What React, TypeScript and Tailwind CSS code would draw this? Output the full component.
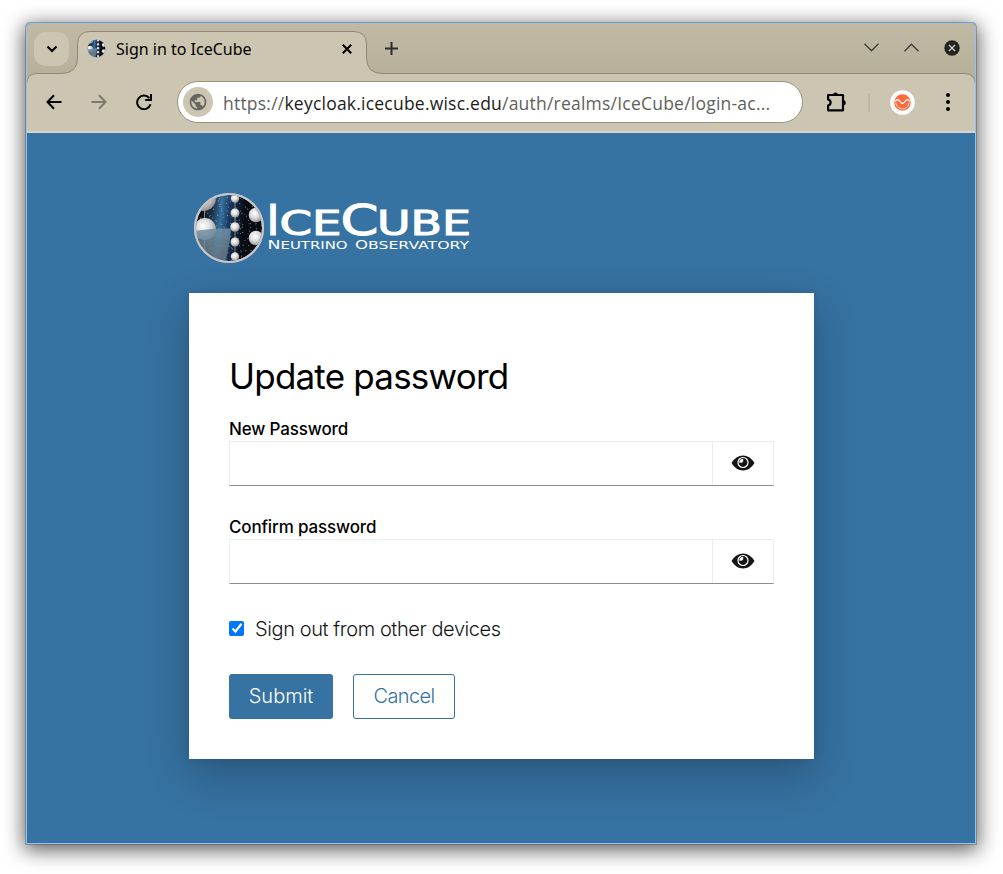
import React from "react";

const stars = Array.from({ length: 190 }, (_, i) => {
  const a = (i * 2.399963) % (Math.PI * 2);
  const r = 32 * Math.sqrt((i + 0.5) / 190);
  const j = ((i * 37) % 11) - 5;
  return { x: 35 + r * Math.cos(a) + j * 0.4, y: 35 + r * Math.sin(a) - j * 0.3, s: 0.3 + ((i * 7) % 5) * 0.11, o: 0.35 + ((i * 3) % 5) * 0.13 };
});

function Globe({ id, className }: { id: string; className: string }) {
  return (
    <svg viewBox="0 0 70 70" className={className}>
      <defs>
        <radialGradient id={id + "s"} cx="42%" cy="38%" r="65%">
          <stop offset="0" stopColor="#ffffff" />
          <stop offset="0.5" stopColor="#dcdcdc" />
          <stop offset="1" stopColor="#8e8e8e" />
        </radialGradient>
        <linearGradient id={id + "m"} x1="0" x2="1" y1="0" y2="0.1">
          <stop offset="0.12" stopColor="#0a0a0e" />
          <stop offset="0.3" stopColor="#1c3850" />
          <stop offset="0.41" stopColor="#36709f" />
          <stop offset="0.54" stopColor="#15335a" />
          <stop offset="0.74" stopColor="#0a0c14" />
        </linearGradient>
        <linearGradient id={id + "w"} x1="0" x2="0" y1="0" y2="1">
          <stop offset="0" stopColor="#7092a6" stopOpacity="0.85" />
          <stop offset="1" stopColor="#66727b" stopOpacity="0.8" />
        </linearGradient>
        <clipPath id={id + "c"}><circle cx="35" cy="35" r="33" /></clipPath>
      </defs>
      <circle cx="35" cy="35" r="35" fill="#c5c5c7" />
      <g clipPath={`url(#${id}c)`}>
        <rect width="70" height="70" fill={`url(#${id}m)`} />
        {stars.map((s, i) => (
          <circle key={i} cx={s.x} cy={s.y} r={s.s} fill={i % 3 ? "#a9c4dd" : "#d5cfae"} opacity={s.o} />
        ))}
        <path d="M10.5 0V70M41 0V70" stroke="#9aa5ad" strokeWidth="0.8" />
        <circle cx="9" cy="5" r="13" fill={`url(#${id}s)`} />
        <circle cx="11" cy="36" r="11" fill={`url(#${id}s)`} />
        <path d="M0 38Q18 35 37 35.5Q36 52 31 70H0Z" fill={`url(#${id}w)`} />
        <circle cx="41" cy="5.500" r="4.200" fill={`url(#${id}s)`} />
        <circle cx="41" cy="20" r="4.500" fill={`url(#${id}s)`} />
        <circle cx="41" cy="34" r="4.800" fill={`url(#${id}s)`} />
        <circle cx="41" cy="49" r="4.500" fill={`url(#${id}s)`} />
        <circle cx="41" cy="63.500" r="4.200" fill={`url(#${id}s)`} />
        <circle cx="62" cy="22" r="7.300" fill={`url(#${id}s)`} />
        <circle cx="62" cy="45" r="7.300" fill={`url(#${id}s)`} />
      </g>
      <circle cx="35" cy="35" r="34" fill="none" stroke="#c5c5c7" strokeWidth="2" />
    </svg>
  );
}

function Wordmark() {
  const big = { fontSize: 42, stroke: "white", strokeWidth: 1.1 };
  const small = { fontSize: 34, stroke: "white", strokeWidth: 1.1 };
  const fit = "spacingAndGlyphs" as const;
  return (
    <svg width="208" height="70" viewBox="0 0 208 70" fill="white" fontFamily="'DejaVu Sans', sans-serif">
      <text x="2.500" y="41.500" textLength="13" lengthAdjust={fit} {...big}>I</text>
      <text x="15.500" y="41.500" textLength="62" lengthAdjust={fit} {...small}>CE</text>
      <text x="76.500" y="41.500" textLength="38" lengthAdjust={fit} {...big}>C</text>
      <text x="113" y="41.500" textLength="94" lengthAdjust={fit} {...small}>UBE</text>
      <text x="3.500" y="56" textLength="13" lengthAdjust={fit} fontSize="13">N</text>
      <text x="16.500" y="56" textLength="67" lengthAdjust={fit} fontSize="11">EUTRINO</text>
      <text x="91" y="56" textLength="13" lengthAdjust={fit} fontSize="13">O</text>
      <text x="104" y="56" textLength="101" lengthAdjust={fit} fontSize="11">BSERVATORY</text>
    </svg>
  );
}

function Chrome() {
  return (
    <header className="relative h-[109px] bg-gradient-to-b from-[#c0baa5] to-[#b6b099] to-50% font-['Noto_Sans',sans-serif]">
      <svg className="absolute left-0 top-0" width="948" height="109" viewBox="27 24 948 109">
        <path d="M26.500 134V84Q27 73.500 37 73.500H62Q77.500 73 77.500 58V43.500Q78 31.500 90 31.500H354Q366.500 32 366.500 44V58Q367 73.500 382 73.500H965Q975 74 975.500 84V134Z" fill="#cbc5b1" stroke="#8e8976" />
        <rect x="27" y="131" width="949" height="2" fill="#d8d4cb" />
      </svg>
      <div className="relative flex h-[49px] items-center pl-[7px]">
        <button className="flex h-[34px] w-[35px] items-center justify-center rounded-[12px] bg-[#cbc5b1]">
          <svg width="12" height="8" viewBox="0 0 12 8" fill="none" stroke="#000" strokeWidth="2"><path d="M1.500 1.500L6 6L10.500 1.500" /></svg>
        </button>
        <Globe id="f" className="ml-[18px] h-[19px] w-[19px]" />
        <span className="ml-[10px] w-[223px] whitespace-nowrap text-[16px] leading-[20px] text-black">Sign in to IceCube</span>
        <svg className="ml-[3px]" width="10" height="10" viewBox="0 0 10 10" stroke="#000" strokeWidth="2"><path d="M.8 .8L9.200 9.200M9.200 .8L.8 9.200" /></svg>
        <svg className="ml-[33px]" width="13" height="13" viewBox="0 0 13 13" stroke="#282c2c" strokeWidth="2"><path d="M0 6.500H13M6.500 0V13" /></svg>
        <div className="ml-auto mr-[15px] flex items-center gap-[25px] pb-[2px]">
          <svg width="15" height="9" viewBox="0 0 15 9" fill="none" stroke="#3b3b38" strokeWidth="1.300"><path d="M.5 .8L7.500 7.800L14.500 .8" /></svg>
          <svg width="15" height="9" viewBox="0 0 15 9" fill="none" stroke="#3b3b38" strokeWidth="1.300"><path d="M.5 8.200L7.500 1.200L14.500 8.200" /></svg>
          <svg width="16" height="16" viewBox="0 0 16 16"><circle cx="8" cy="8" r="7.700" fill="#242422" /><path d="M5 5L11 11M11 5L5 11" stroke="#c9c4b3" strokeWidth="1.500" /></svg>
        </div>
      </div>
      <div className="relative flex h-[58px] items-center pl-[19px]">
        <svg width="16" height="16" viewBox="0 0 16 16" fill="none" stroke="#000" strokeWidth="2"><path d="M15.500 8H2M8 1.300L1.500 8L8 14.700" /></svg>
        <svg className="ml-[29px]" width="16" height="16" viewBox="0 0 16 16" fill="none" stroke="#7c796d" strokeWidth="2"><path d="M.5 8H14M8 1.300L14.500 8L8 14.700" /></svg>
        <svg className="ml-[29px]" width="16" height="16" viewBox="0 0 16 16" fill="none" stroke="#000" strokeWidth="2"><path d="M13.300 4.200A6.800 6.800 0 1 0 14.500 10.200M15 0V6H9.200" /></svg>
        <div className="ml-[25px] flex h-[42px] w-[626px] items-center rounded-full border border-[#98927b] bg-white pl-[5px]">
          <span className="flex h-[30px] w-[30px] items-center justify-center rounded-full bg-[#cbc5b1]">
            <svg width="20" height="20" viewBox="0 0 24 24" fill="#666660"><path d="M12 2C6.480 2 2 6.480 2 12s4.480 10 10 10 10-4.480 10-10S17.520 2 12 2zm-1 17.930c-3.950-.49-7-3.850-7-7.930 0-.62.080-1.210.210-1.790L9 15v1c0 1.100.9 2 2 2v1.930zm6.900-2.540c-.26-.81-1-1.390-1.900-1.390h-1v-3c0-.55-.45-1-1-1H8v-2h2c.55 0 1-.45 1-1V7h2c1.100 0 2-.9 2-2v-.41c2.930 1.190 5 4.060 5 7.410 0 2.080-.8 3.970-2.100 5.390z" /></svg>
          </span>
          <span className="ml-[10px] whitespace-nowrap pt-[1px] font-['Open_Sans','Noto_Sans',sans-serif] text-[17.500px] leading-[24px] tracking-[0.22px] text-[#605f59]">https://<span className="text-[#1c1c1a]">keycloak.icecube.wisc.edu</span>/auth/realms/IceCube/login-ac...</span>
        </div>
        <svg className="ml-[22px]" width="22" height="22" viewBox="0 0 22 22"><path d="M3.100 4H18V19.300H3.100V14.500Q5.600 14 5.600 11.500T3.100 8.500Z" fill="none" stroke="#000" strokeWidth="2.200" strokeLinejoin="round" /><path d="M8 4a2.500 2.500 0 0 1 5 0ZM18 9a2.700 2.700 0 0 1 0 5.400Z" /></svg>
        <span className="ml-[21px] h-[19px] w-[2px] bg-[#bdb7a3]" />
        <svg className="ml-[20px]" width="25" height="25" viewBox="0 0 25 25"><circle cx="12.500" cy="12.500" r="12.300" fill="white" /><circle cx="12.500" cy="12.500" r="8.300" fill="#ff6b3c" /><path d="M5.300 11.500C7 8.500 8.500 9.500 9.600 11.200Q12.500 15.500 15.400 11.200C16.500 9.500 18 8.500 19.700 11.500" fill="none" stroke="white" strokeWidth="1.300" /><path d="M5.800 12.500C7 21 18 21 19.200 12.500" fill="none" stroke="white" strokeWidth=".8" /></svg>
        <svg className="ml-[31px]" width="4" height="18" viewBox="0 0 4 18"><circle cx="2" cy="2" r="2" /><circle cx="2" cy="9" r="2" /><circle cx="2" cy="16" r="2" /></svg>
      </div>
    </header>
  );
}

function PasswordField({ label }: { label: string }) {
  return (
    <div>
      <label className="block h-[24px] whitespace-nowrap text-[17px] font-medium leading-[25px] tracking-[-0.15px] text-black">{label}</label>
      <div className="flex h-[45px] w-[545px] border border-[#ededed] border-b-[#8a8d90]">
        <input type="password" aria-label={label} className="min-w-0 flex-1 outline-none" />
        <button aria-label="Show password" className="flex w-[61px] items-center justify-center border-l border-[#ededed] pb-[2px]">
          <svg width="24" height="16" viewBox="0 0 24 16">
            <path d="M.5 8Q5 .5 12 .5T23.500 8Q19 15.500 12 15.500T.5 8Z" fill="#151515" />
            <circle cx="12" cy="7.500" r="5" fill="#151515" stroke="white" strokeWidth="1.200" />
            <path d="M8.500 7.500A3.500 3.500 0 0 1 12 4V5.800A1.700 1.700 0 0 1 10.300 7.500Z" fill="white" stroke="white" strokeWidth=".4" />
          </svg>
        </button>
      </div>
    </div>
  );
}

export default function App() {
  return (
    <div className="h-[874px] w-[1003px] overflow-hidden bg-white pl-[26px] pt-[23px]">
      <div className="h-[821px] w-[950px] overflow-hidden rounded-t-[4px] border border-[#8fc3f5] bg-[#3672a2] shadow-[0_0_0_1px_rgba(80,80,75,0.4),0_4px_20px_2px_rgba(0,0,0,0.65)]">
        <Chrome />
        <main className="pl-[162px] pt-[60px] font-['Inter',sans-serif]">
          <div className="flex h-[70px] pl-[5px]">
            <Globe id="g" className="h-[70px] w-[70px]" />
            <Wordmark />
          </div>
          <section className="mt-[30px] h-[466px] w-[625px] bg-white pl-[40px] pt-[60px] shadow-[0_16px_42px_rgba(3,3,3,0.24),0_0_8px_rgba(3,3,3,0.1)]">
            <h1 className="h-[46px] whitespace-nowrap text-[35px] leading-[46px] tracking-[-0.8px] text-black">Update password</h1>
            <div className="mt-[18px]"><PasswordField label="New Password" /></div>
            <div className="mt-[29px]"><PasswordField label="Confirm password" /></div>
            <label className="mt-[30px] flex h-[30px] items-center text-[20px] font-light text-[#151515]">
              <span className="mb-[2px] flex h-[15px] w-[15px] items-center justify-center rounded-[2px] bg-[#0075ff]">
                <svg width="12" height="12" viewBox="0 0 12 12" fill="none" stroke="white" strokeWidth="2.200"><path d="M1.500 6.500L4.500 9.500L10.500 1.800" /></svg>
              </span>
              <span className="ml-[11px] whitespace-nowrap leading-[30px] tracking-[-0.41px]">Sign out from other devices</span>
            </label>
            <div className="mt-[30px] flex gap-[20px] text-[20px] font-light leading-[43px]">
              <button className="h-[45px] w-[104px] rounded-[3px] bg-[#3672a2] text-white">Submit</button>
              <button className="h-[45px] w-[102px] rounded-[3px] border border-[#3672a2] tracking-[-0.6px] text-[#3672a2]">Cancel</button>
            </div>
          </section>
        </main>
      </div>
    </div>
  );
}
